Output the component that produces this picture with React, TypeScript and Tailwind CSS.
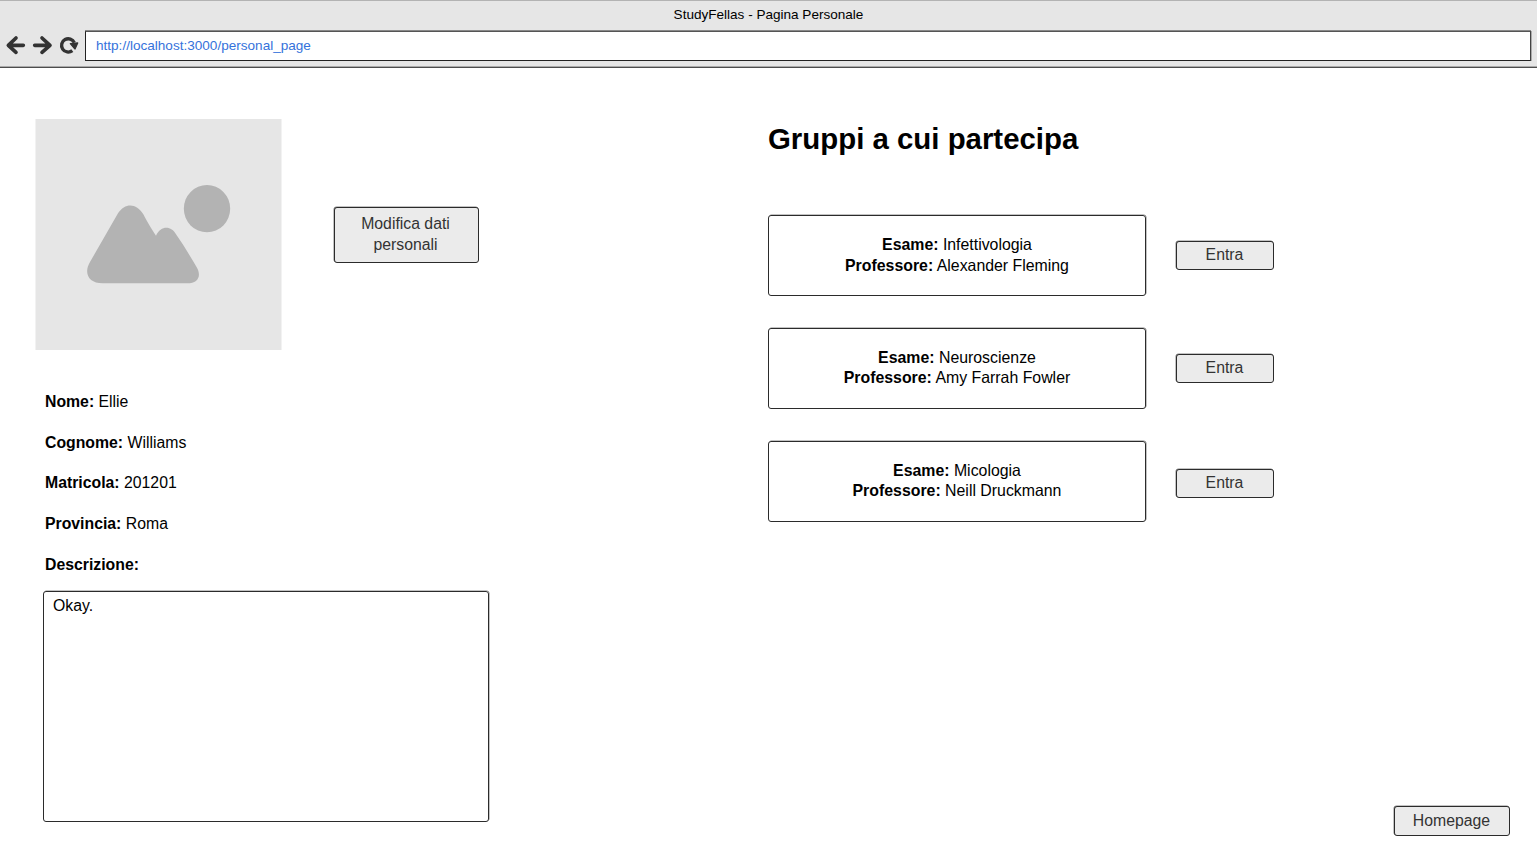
import type { ReactNode } from "react";

const details = [
  { label: "Nome:", value: "Ellie" },
  { label: "Cognome:", value: "Williams" },
  { label: "Matricola:", value: "201201" },
  { label: "Provincia:", value: "Roma" },
  { label: "Descrizione:", value: "" },
];

const groups = [
  { exam: "Infettivologia", professor: "Alexander Fleming", pad: "", offset: "" },
  { exam: "Neuroscienze", professor: "Amy Farrah Fowler", pad: "pb-[0.8px]", offset: "" },
  { exam: "Micologia", professor: "Neill Druckmann", pad: "pb-[0.8px]", offset: "mt-1" },
];

function Button({ className, children }: { className: string; children: ReactNode }) {
  return (
    <button
      className={`flex items-center justify-center rounded-[3px] border border-[#2b2b2b] bg-[#ebebeb] text-center text-[15.8px] text-[#333] shadow-[-0.5px_-0.5px_0_#888] ${className}`}
    >
      {children}
    </button>
  );
}

function NavIcons() {
  return (
    <svg viewBox="0 96 255 81" className="h-[27px] w-[85px] shrink-0" fill="none" stroke="#333" strokeWidth="11" strokeLinecap="round" strokeLinejoin="round">
      <path d="M70 136H28M48 114L25 136L48 157" />
      <path d="M104 136H146M126 114L150 136L126 157" />
      <path d="M223 128A20 20 0 1 0 217 152" strokeWidth="10" strokeLinecap="butt" />
      <path d="M211 131L233 129L225 147Z" fill="#333" strokeWidth="4" />
    </svg>
  );
}

function BrowserBar() {
  return (
    <header className="flex h-[68px] shrink-0 flex-col border-t border-b border-t-[#b3b3b3] border-b-[#4d4d4d] bg-[#e6e6e6] shadow-[inset_0_-1px_0_#aaa]">
      <div className="h-[29px] text-center text-[13.55px] leading-[27px] text-black">StudyFellas - Pagina Personale</div>
      <div className="flex items-center pr-[6px]">
        <NavIcons />
        <div className="mt-px h-[30px] flex-1 border border-t-[#555] border-r-[#444] border-b-[#222] border-l-[#222] bg-white pl-[10px] text-[13.57px] leading-[27px] text-[#3572db] shadow-[0_-1px_0_#888,1px_0_0_#aaa]">
          http://localhost:3000/personal_page
        </div>
      </div>
    </header>
  );
}

function Picture() {
  return (
    <svg viewBox="15 27 741 693" className="h-[231px] w-[247px] shrink-0">
      <rect x="16.5" y="27" width="738" height="693" fill="#e6e6e6" />
      <ellipse cx="531" cy="296" rx="69.5" ry="71" fill="#b3b3b3" />
      <path
        fill="#b3b3b3"
        d="M264 310C285 278 319 278 340 313C353 338 362 353 378 377C392 346 424 346 438 373C460 404 480 438 501 473C515 499 503 520 472 520H218C176 520 160 490 180 456Z"
      />
    </svg>
  );
}

export default function App() {
  return (
    <div className="flex h-[864px] w-[1537px] flex-col overflow-hidden bg-white font-['Liberation_Sans',Arial,sans-serif] text-[15.8px] leading-[20.4px] text-black">
      <BrowserBar />
      <main className="flex flex-1">
        <section className="w-[768px] pt-[51px] pl-[35px]">
          <div className="flex items-center gap-[52px]">
            <Picture />
            <Button className="mt-px h-[56px] w-[145px] pr-[22px] pb-px pl-5">Modifica dati personali</Button>
          </div>
          <dl className="mt-[41.8px] ml-[10px] flex flex-col gap-[20.4px]">
            {details.map((item) => (
              <div key={item.label} className="flex gap-[4.4px]">
                <dt className="font-bold">{item.label}</dt>
                <dd>{item.value}</dd>
              </div>
            ))}
          </dl>
          <textarea
            readOnly
            value="Okay."
            className="mt-[15.2px] ml-[8px] block h-[231px] w-[446px] resize-none rounded-[3px] border border-[#2b2b2b] pt-[4px] pl-[9px] shadow-[0.5px_-0.5px_0_#888] outline-none"
          />
        </section>
        <section className="flex flex-1 flex-col pt-[51px]">
          <h1 className="text-[29.4px] leading-[40px] font-bold">Gruppi a cui partecipa</h1>
          <div className="mt-[56px] flex flex-col gap-8">
            {groups.map((group) => (
              <div key={group.exam} className="flex items-center gap-[30px]">
                <article
                  className={`flex h-[81px] w-[378px] flex-col items-center justify-center rounded-[3px] border border-[#2b2b2b] text-[15.86px] shadow-[0.5px_-0.5px_0_#888] ${group.pad}`}
                >
                  <p><b>Esame:</b> {group.exam}</p>
                  <p><b>Professore:</b> {group.professor}</p>
                </article>
                <div className={group.offset}>
                  <Button className="h-[29px] w-[98px] pr-px">Entra</Button>
                </div>
              </div>
            ))}
          </div>
          <div className="mt-auto mr-[27px] mb-[28px] flex justify-end">
            <Button className="h-[30px] w-[116px] pr-px">Homepage</Button>
          </div>
        </section>
      </main>
    </div>
  );
}
